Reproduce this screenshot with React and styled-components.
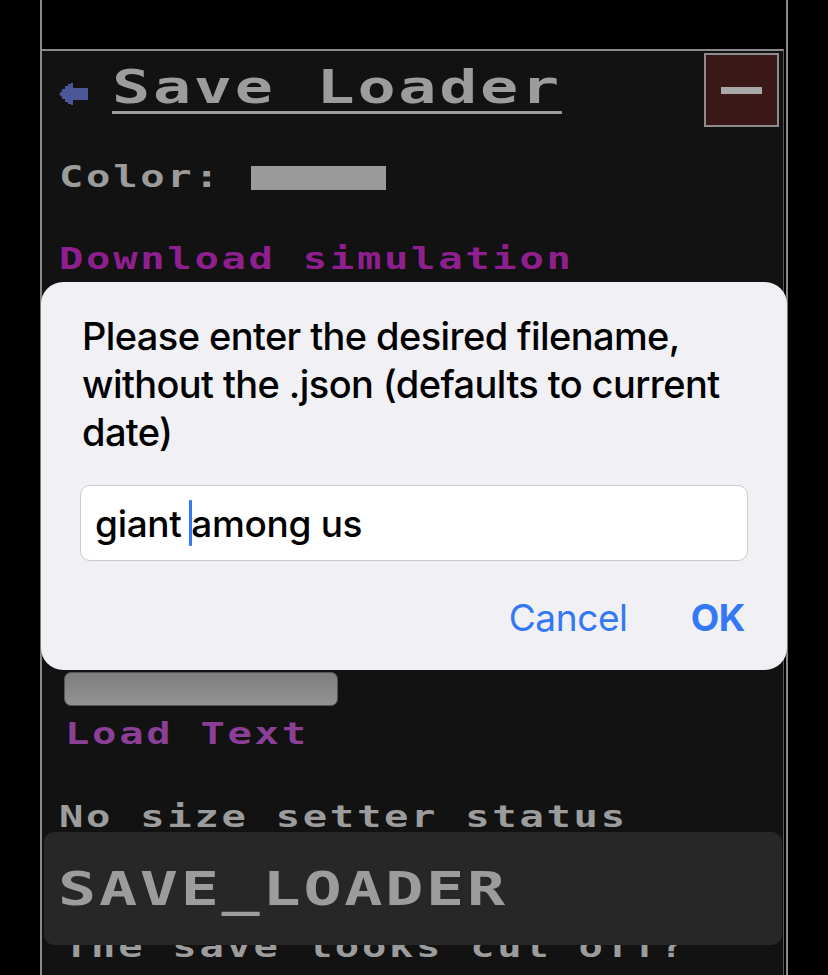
import React from 'react';
import styled, { createGlobalStyle } from 'styled-components';

const GlobalStyle = createGlobalStyle`
  html, body {
    margin: 0;
    padding: 0;
    background: #000;
    overflow: hidden;
  }
`;

const Screen = styled.div`
  position: relative;
  width: 828px;
  height: 975px;
  background: #000;
  overflow: hidden;
`;

const Frame = styled.div`
  margin-left: 40px;
  width: 744px;
  height: 975px;
  border-left: 2px solid #8a8a8a;
  border-right: 2px solid #8a8a8a;
  display: flex;
  flex-direction: column;
`;

const TopGap = styled.div`
  height: 49px;
  flex-shrink: 0;
`;

const Panel = styled.div`
  flex: 1;
  background: #121212;
  border-top: 2px solid #8a8a8a;
  border-right: 1px solid #5a5a5a;
  margin-right: 2px;
  padding: 0 0 0 17px;
  font-family: "DejaVu Sans Mono", "Liberation Mono", monospace;
  font-weight: bold;
  color: #9c9c9c;
`;

const Header = styled.div`
  display: flex;
  align-items: flex-start;
  justify-content: space-between;
`;

const TitleRow = styled.div`
  display: flex;
  align-items: flex-start;
  margin-top: 12px;
  gap: 24px;

  svg {
    margin-top: 20px;
  }
`;

/* the pixel font of the original is wider than any installed mono face,
   so the glyphs are stretched sideways */
const Title = styled.h1`
  margin: 0;
  font-size: 47px;
  line-height: 47px;
  font-weight: bold;
  letter-spacing: 2px;
  color: #9c9c9c;
  text-decoration: underline;
  text-decoration-thickness: 3px;
  text-underline-offset: 8px;
  transform: scaleX(1.35);
  transform-origin: left center;
  white-space: nowrap;
`;

const MinusButton = styled.div`
  width: 71px;
  height: 70px;
  margin: 2px 4px 0 0;
  background: #3a1818;
  border: 2px solid #8c8c8c;
  display: flex;
  align-items: center;
  justify-content: center;
`;

const MinusBar = styled.div`
  width: 41px;
  height: 7px;
  background: #a8a8a8;
`;

const Line = styled.div`
  font-size: 30px;
  line-height: 30px;
  letter-spacing: 2px;
  white-space: nowrap;
  transform: scaleX(1.35);
  transform-origin: left center;
  color: ${p => p.$color || '#9c9c9c'};
  margin-top: ${p => p.$top || 0}px;
  margin-left: ${p => p.$indent || 0}px;
`;

const ColorRow = styled.div`
  display: flex;
  align-items: flex-start;
  margin-top: 35px;
  height: 30px;
`;

const Swatch = styled.div`
  width: 135px;
  height: 24px;
  background: #9a9a9a;
  margin: 4px 0 0 72px;
`;

const HiddenBlock = styled.div`
  height: ${p => p.$h}px;
`;

const GreyBar = styled.div`
  width: 272px;
  height: 32px;
  margin-left: 5px;
  border-radius: 7px;
  border: 1px solid #555;
  background: linear-gradient(#7e7e7e, #929292);
`;

const Dialog = styled.div`
  position: absolute;
  left: 41px;
  top: 282px;
  width: 746px;
  height: 388px;
  box-sizing: border-box;
  background: #f1f0f5;
  border-radius: 22px;
  padding: 30px 42px 0 41px;
  font-family: Inter, "Noto Sans", sans-serif;
  box-shadow: 0 0 2px rgba(0, 0, 0, 0.4);
`;

const Message = styled.p`
  margin: 0;
  font-size: 38px;
  line-height: 48px;
  font-weight: 500;
  color: #000;
  letter-spacing: -0.6px;
`;

const Field = styled.div`
  margin-top: 29px;
  margin-left: -2px;
  margin-right: -3px;
  height: 76px;
  box-sizing: border-box;
  background: #fff;
  border: 1px solid #c9c9ce;
  border-radius: 10px;
  display: flex;
  align-items: center;
  padding-left: 14px;
  font-size: 37px;
  font-weight: 500;
  color: #000;
  letter-spacing: -0.3px;
  white-space: pre;
`;

const Caret = styled.span`
  display: inline-block;
  width: 3px;
  height: 46px;
  margin: 0 -1px 0 -2px;
  background: #3478f6;
  border-radius: 1px;
  vertical-align: middle;
`;

const Buttons = styled.div`
  display: flex;
  justify-content: flex-end;
  gap: 63px;
  margin-top: 37px;
`;

const DialogButton = styled.span`
  font-size: 37px;
  line-height: 40px;
  color: #3478f6;
  font-weight: ${p => (p.$bold ? 700 : 400)};
  letter-spacing: -0.4px;
`;

const Toast = styled.div`
  position: absolute;
  left: 44px;
  top: 832px;
  width: 738px;
  height: 113px;
  background: #272727;
  border-radius: 10px;
  display: flex;
  align-items: center;
  padding-left: 14px;
  box-sizing: border-box;
  font-family: "DejaVu Sans Mono", "Liberation Mono", monospace;
  font-weight: bold;
  color: #9c9c9c;
`;

const ToastText = styled.span`
  font-size: 47px;
  line-height: 47px;
  letter-spacing: 2px;
  transform: scaleX(1.35);
  transform-origin: left center;
`;

const BackArrow = () => (
  <svg width="29" height="22" viewBox="0 0 29 22">
    <polygon
      points="0,11 3,8 3,6 6,6 6,3 9,3 9,1 12,1 12,0 14,0 14,5 29,5 29,17 14,17 14,22 12,22 12,21 9,21 9,19 6,19 6,16 3,16 3,14"
      fill="#4b5898"
    />
  </svg>
);

export default function App() {
  return (
    <Screen>
      <GlobalStyle />
      <Frame>
        <TopGap />
        <Panel>
          <Header>
            <TitleRow>
              <BackArrow />
              <Title>Save Loader</Title>
            </TitleRow>
            <MinusButton>
              <MinusBar />
            </MinusButton>
          </Header>
          <ColorRow>
            <Line>Color:</Line>
            <Swatch />
          </ColorRow>
          <Line $top={52} $color="#8f1f8f">Download simulation</Line>
          <HiddenBlock $h={398} />
          <GreyBar />
          <Line $top={13} $indent={6} $color="#8c3f96">Load Text</Line>
          <Line $top={53}>No size setter status</Line>
          <Line $top={100} $indent={5}>The save looks cut off?</Line>
        </Panel>
      </Frame>

      <Dialog>
        <Message>
          Please enter the desired filename, without the .json (defaults to current date)
        </Message>
        <Field>
          giant <Caret />among us
        </Field>
        <Buttons>
          <DialogButton>Cancel</DialogButton>
          <DialogButton $bold>OK</DialogButton>
        </Buttons>
      </Dialog>

      <Toast>
        <ToastText>SAVE_LOADER</ToastText>
      </Toast>
    </Screen>
  );
}
